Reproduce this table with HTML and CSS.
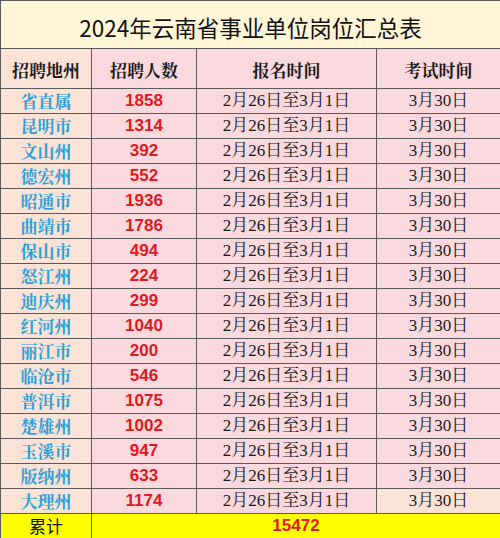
FILE: index.html
```html
<!DOCTYPE html>
<html lang="zh-CN">
<head>
<meta charset="utf-8">
<title>2024年云南省事业单位岗位汇总表</title>
<link rel="stylesheet" href="styles.css">
</head>
<body>
<table class="sheet">
  <colgroup>
    <col class="c1"><col class="c2"><col class="c3"><col class="c4">
  </colgroup>
  <tr class="title-row"><td colspan="4">2024年云南省事业单位岗位汇总表</td></tr>
  <tr class="head-row">
    <th class="peach">招聘地州</th><th>招聘人数</th><th>报名时间</th><th>考试时间</th>
  </tr>
  <tr><td class="city">省直属</td><td class="num">1858</td><td class="date">2月26日至3月1日</td><td class="date">3月30日</td></tr>
  <tr><td class="city">昆明市</td><td class="num">1314</td><td class="date">2月26日至3月1日</td><td class="date">3月30日</td></tr>
  <tr><td class="city">文山州</td><td class="num">392</td><td class="date">2月26日至3月1日</td><td class="date">3月30日</td></tr>
  <tr><td class="city">德宏州</td><td class="num">552</td><td class="date">2月26日至3月1日</td><td class="date">3月30日</td></tr>
  <tr><td class="city">昭通市</td><td class="num">1936</td><td class="date">2月26日至3月1日</td><td class="date">3月30日</td></tr>
  <tr><td class="city">曲靖市</td><td class="num">1786</td><td class="date">2月26日至3月1日</td><td class="date">3月30日</td></tr>
  <tr><td class="city">保山市</td><td class="num">494</td><td class="date">2月26日至3月1日</td><td class="date">3月30日</td></tr>
  <tr><td class="city">怒江州</td><td class="num">224</td><td class="date">2月26日至3月1日</td><td class="date">3月30日</td></tr>
  <tr><td class="city">迪庆州</td><td class="num">299</td><td class="date">2月26日至3月1日</td><td class="date">3月30日</td></tr>
  <tr><td class="city">红河州</td><td class="num">1040</td><td class="date">2月26日至3月1日</td><td class="date">3月30日</td></tr>
  <tr><td class="city">丽江市</td><td class="num">200</td><td class="date">2月26日至3月1日</td><td class="date">3月30日</td></tr>
  <tr><td class="city">临沧市</td><td class="num">546</td><td class="date">2月26日至3月1日</td><td class="date">3月30日</td></tr>
  <tr><td class="city">普洱市</td><td class="num">1075</td><td class="date">2月26日至3月1日</td><td class="date">3月30日</td></tr>
  <tr><td class="city">楚雄州</td><td class="num">1002</td><td class="date">2月26日至3月1日</td><td class="date">3月30日</td></tr>
  <tr><td class="city">玉溪市</td><td class="num">947</td><td class="date">2月26日至3月1日</td><td class="date">3月30日</td></tr>
  <tr><td class="city">版纳州</td><td class="num">633</td><td class="date">2月26日至3月1日</td><td class="date">3月30日</td></tr>
  <tr><td class="city">大理州</td><td class="num">1174</td><td class="date">2月26日至3月1日</td><td class="date peach">3月30日</td></tr>
  <tr class="total-row"><td class="total-label">累计</td><td class="num" colspan="3">15472</td></tr>
</table>
</body>
</html>
```
FILE: styles.css
```css
html, body {
  margin: 0;
  padding: 0;
  background: #ffffff;
}
.sheet {
  border-collapse: collapse;
  width: 500px;
  table-layout: fixed;
  font-family: "Liberation Serif", "Noto Serif CJK SC", "Noto Sans CJK SC", serif;
}
.c1 { width: 91px; }
.c2 { width: 105px; }
.c3 { width: 180px; }
.c4 { width: 124px; }
.sheet td, .sheet th {
  border: 1px solid #5a5a5a;
  padding: 0;
  text-align: center;
  background: #f9d9dd;
  white-space: nowrap;
  line-height: 20px;
  height: 24px;
}
.title-row td {
  background: #fef6d6;
  font-family: "Noto Sans CJK SC", "Liberation Sans", sans-serif;
  font-size: 22.5px;
  color: #111;
  height: 48px;
  line-height: 30px;
  padding-top: 4px;
  box-sizing: border-box;
}
.head-row th {
  height: 40px;
  padding-top: 3px;
  box-sizing: border-box;
  font-size: 17px;
  font-weight: bold;
  color: #1a1a1a;
  font-family: "Noto Serif CJK SC", "Noto Sans CJK SC", serif;
}
.sheet .peach { background: #fbe2d6; }
.sheet td.city {
  background: #fbe2d6;
  color: #2e9fd6;
  font-weight: bold;
  font-size: 17px;
  font-family: "Noto Serif CJK SC", "Noto Sans CJK SC", serif;
}
.sheet td.num {
  color: #dd1a22;
  font-family: "Liberation Sans", Arial, sans-serif;
  font-weight: bold;
  font-size: 17px;
}
.sheet td.date {
  color: #1a1a1a;
  font-size: 17px;
}
.total-row td {
  background: #ffff00 !important;
}
.sheet td.total-label {
  font-family: "Noto Sans CJK SC", sans-serif;
  font-size: 17px;
  color: #111;
}
```
